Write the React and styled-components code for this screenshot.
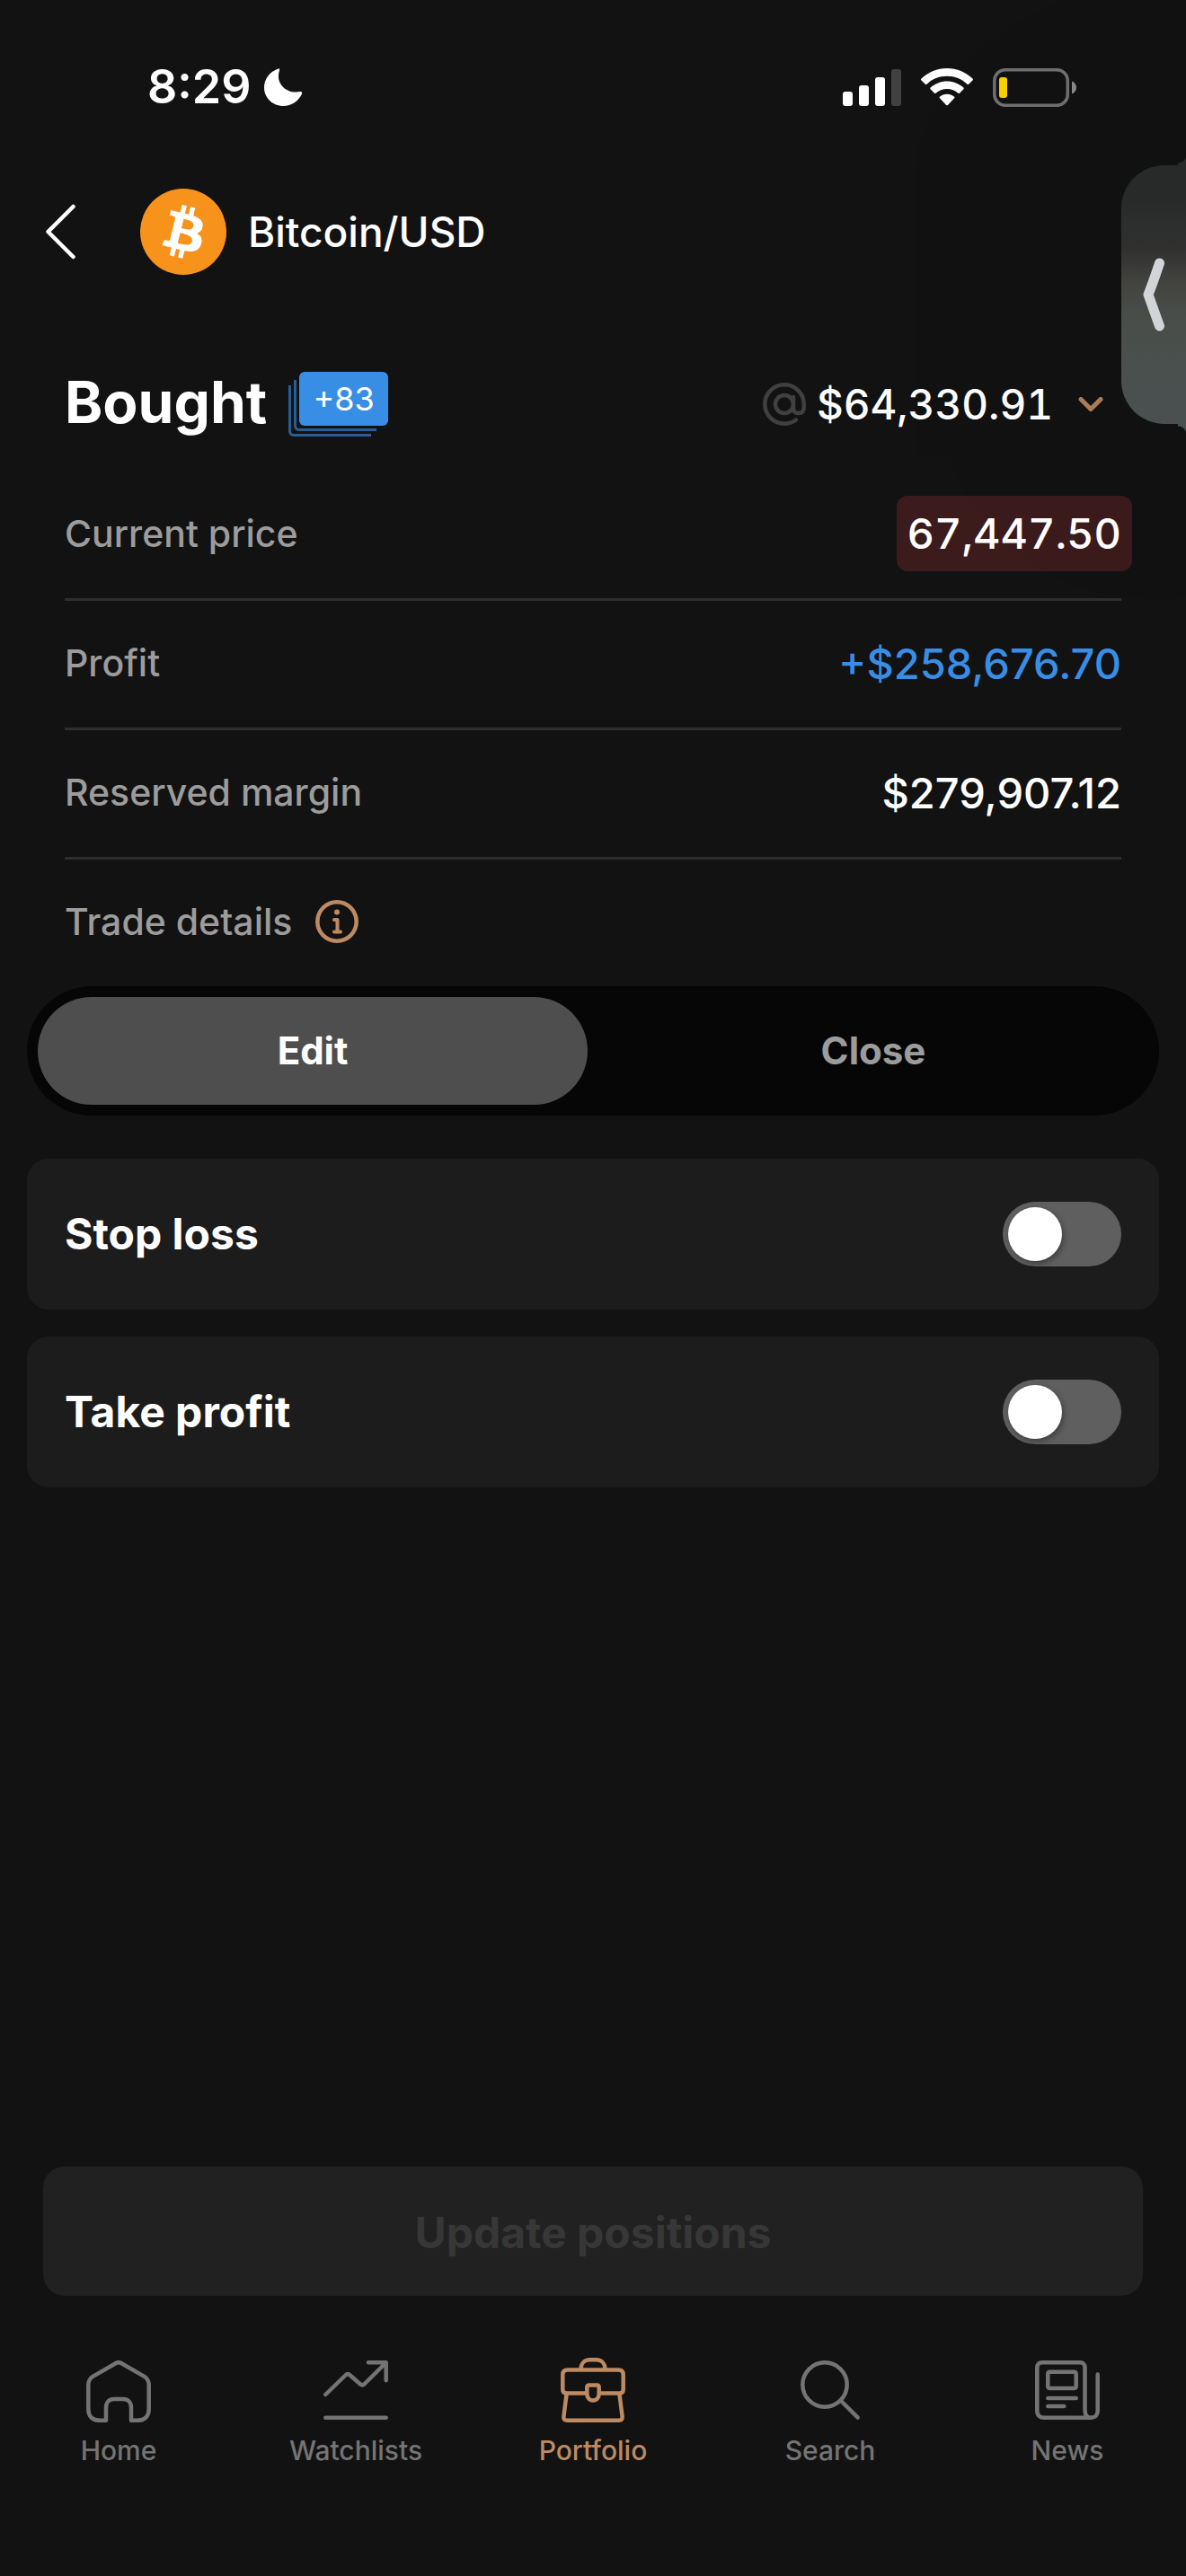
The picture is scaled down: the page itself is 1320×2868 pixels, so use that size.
import React, { useState } from "react";
import styled, { createGlobalStyle, ThemeProvider } from "styled-components";

const theme = {
  colors: {
    background: "#121212",
    card: "#1c1c1c",
    line: "#2e2e2e",
    white: "#ffffff",
    label: "#9c9c9c",
    muted: "#747474",
    blue: "#388ee5",
    darkBlue: "#295d93",
    copper: "#be8a62",
    red: "#3c1b1d",
  },
  sizes: {
    small: "30px",
    label: "41px",
    segment: "42px",
    heading: "46px",
    value: "47px",
    action: "48px",
    title: "64px",
  },
};

const GlobalStyle = createGlobalStyle`
  * {
    box-sizing: border-box;
  }

  body {
    margin: 0;
    background-color: ${theme.colors.background};
    color: ${theme.colors.white};
    font-family: Inter, "Liberation Sans", sans-serif;
  }

  button {
    padding: 0;
    border: none;
    background: none;
    color: inherit;
    font: inherit;
    cursor: pointer;
  }

  svg {
    display: block;
    flex: none;
  }
`;

const Screen = styled.div`
  position: relative;
  display: flex;
  flex-direction: column;
  min-height: 100vh;
  overflow: hidden;
`;

const StatusBar = styled.div`
  display: flex;
  align-items: center;
  justify-content: space-between;
  padding: 66px 122px 0 164px;
  line-height: 62px;
`;

const Clock = styled.div`
  display: flex;
  align-items: center;
  gap: 14px;
  font-size: 52px;
  font-weight: 600;
`;

const StatusIcons = styled.div`
  display: flex;
  align-items: center;
  gap: 22px;
`;

const Header = styled.header`
  display: flex;
  align-items: center;
  margin-top: 82px;
  padding: 0 48px;
`;

const BackButton = styled.button`
  margin-right: 69px;
`;

const PairName = styled.h1`
  margin: 0 0 0 24px;
  font-size: ${(props) => props.theme.sizes.heading};
  font-weight: 500;
`;

const TitleRow = styled.div`
  display: flex;
  align-items: center;
  height: 72px;
  margin: 108px 72px 0;
`;

const Title = styled.h2`
  margin: 0;
  padding-bottom: 4px;
  font-size: ${(props) => props.theme.sizes.title};
  font-weight: 700;
  line-height: 68px;
`;

/* Stack of positions: one solid card with two outlines peeking out below */
const Stack = styled.div`
  position: relative;
  margin-left: 24px;
  padding: 0 0 12px 12px;
`;

const StackCount = styled.span`
  display: block;
  min-width: 99px;
  border-radius: 6px;
  background-color: ${(props) => props.theme.colors.blue};
  font-size: 36px;
  line-height: 60px;
  text-align: center;
`;

const StackEdge = styled.span`
  position: absolute;
  top: ${(props) => 3 + props.$depth * 6}px;
  right: ${(props) => 7 + props.$depth * 6}px;
  bottom: ${(props) => 12 - props.$depth * 6}px;
  left: ${(props) => 12 - props.$depth * 6}px;
  border-left: 3px solid ${(props) => props.theme.colors.darkBlue};
  border-bottom: 3px solid ${(props) => props.theme.colors.darkBlue};
  border-bottom-left-radius: 6px;
`;

const PriceButton = styled.button`
  display: flex;
  align-items: center;
  margin-left: auto;
  padding-right: 20px;
  font-size: ${(props) => props.theme.sizes.heading};
  font-weight: 500;
`;

const Price = styled.span`
  margin: 0 28px 0 12px;
  font-variant-numeric: tabular-nums;
`;

const Details = styled.dl`
  margin: 39px 72px 0;
`;

const DetailRow = styled.div`
  display: flex;
  align-items: center;
  justify-content: space-between;
  height: 144px;
  padding-bottom: 3px;

  &:not(:last-child) {
    border-bottom: 3px solid ${(props) => props.theme.colors.line};
  }

  &:last-child {
    height: 141px;
  }
`;

const DetailLabel = styled.dt`
  display: flex;
  align-items: center;
  gap: 26px;
  color: ${(props) => props.theme.colors.label};
  font-size: ${(props) => props.theme.sizes.label};
  font-weight: 500;
`;

const DetailValue = styled.dd`
  margin: 0;
  color: ${(props) => props.theme.colors[props.$color || "white"]};
  font-size: ${(props) => props.theme.sizes.value};
  font-weight: 500;
`;

const PriceTag = styled.span`
  display: block;
  margin-right: -12px;
  padding: 0 12px;
  border-radius: 12px;
  background-color: ${(props) => props.theme.colors.red};
  font-variant-numeric: tabular-nums;
  line-height: 84px;
`;

const Segments = styled.div`
  display: flex;
  gap: 12px;
  margin: 0 30px;
  padding: 12px;
  border-radius: 72px;
  background-color: #060606;
`;

const Segment = styled.button`
  flex: 1;
  border-radius: 60px;
  background-color: ${(props) => (props.$active ? "#4e4e4e" : "transparent")};
  color: ${(props) => (props.$active ? props.theme.colors.white : props.theme.colors.label)};
  font-size: ${(props) => props.theme.sizes.segment};
  font-weight: 700;
  line-height: 120px;
`;

const Cards = styled.div`
  display: flex;
  flex-direction: column;
  gap: 30px;
  margin: 48px 30px;
`;

const Card = styled.label`
  display: flex;
  align-items: center;
  justify-content: space-between;
  padding: 48px 42px;
  border-radius: 24px;
  background-color: ${(props) => props.theme.colors.card};
  font-size: ${(props) => props.theme.sizes.action};
  font-weight: 700;
  line-height: 72px;
`;

const Switch = styled.input`
  display: flex;
  width: 132px;
  height: 72px;
  margin: 0;
  padding: 6px;
  border-radius: 36px;
  background-color: #5f5f5f;
  appearance: none;
  cursor: pointer;

  &::before {
    content: "";
    width: 60px;
    height: 60px;
    border-radius: 50%;
    background-color: ${(props) => props.theme.colors.white};
    box-shadow: 2px 3px 6px rgba(0, 0, 0, 0.35);
  }

  &:checked {
    justify-content: flex-end;
    background-color: ${(props) => props.theme.colors.copper};
  }
`;

const UpdateButton = styled.button`
  margin: auto 48px 69px;
  padding-top: 4px;
  border-radius: 24px;
  background-color: #212121;
  color: #373737;
  font-size: ${(props) => props.theme.sizes.action};
  font-weight: 700;
  line-height: 140px;
`;

const TabBar = styled.nav`
  display: flex;
  padding-bottom: 120px;
`;

const Tab = styled.a`
  display: flex;
  flex: 1;
  flex-direction: column;
  align-items: center;
  gap: 12px;
  color: ${(props) => (props.$active ? props.theme.colors.copper : props.theme.colors.muted)};
  font-size: ${(props) => props.theme.sizes.small};
  font-weight: 500;
  line-height: 39px;
  text-decoration: none;
`;

/* Handle of the floating video window, parked at the right edge */
const SideHandle = styled.button`
  position: absolute;
  top: 184px;
  right: 0;
  display: flex;
  align-items: center;
  width: 72px;
  height: 288px;
  padding-left: 22px;
  border-radius: 48px 0 0 48px;
  background: linear-gradient(#282a2a 12%, #303030 32%, #42433f 45%, #494d49 58%, #4a504e 75%, #49504f);
  box-shadow: 0 0 320px rgba(0, 0, 0, 0.3);

  &::before,
  &::after {
    content: "";
    position: absolute;
    right: 0;
    width: 9px;
    height: 12px;
  }

  &::before {
    bottom: 100%;
    background: radial-gradient(circle at 0 0, transparent 9px, #282a2a 10px);
  }

  &::after {
    top: 100%;
    background: radial-gradient(circle at 0 100%, transparent 9px, #49504f 10px);
  }
`;

const Icon = ({ width = 72, height = 72, stroke = 4.5, children }) => (
  <svg
    width={width}
    height={height}
    viewBox={`0 0 ${width} ${height}`}
    fill="none"
    stroke="currentColor"
    strokeWidth={stroke}
    strokeLinecap="round"
    strokeLinejoin="round"
    aria-hidden="true"
  >
    {children}
  </svg>
);

const MoonIcon = () => (
  <Icon width={43} height={42} stroke={0}>
    <path
      fill="currentColor"
      d="M16 .4C6 3.500 0 12 0 21.500 0 33 9.500 42 21.500 42c9 0 17-5.500 20.600-13.700.6-1.500-.4-2.500-2-2.200C26 29 12 18 17 2.400c.5-1.400 0-2.300-1-2z"
    />
  </Icon>
);

const SignalIcon = () => (
  <Icon width={65} height={42} stroke={0}>
    <g fill="currentColor">
      <rect y="26" width="11" height="16" rx="3" />
      <rect x="18" y="19" width="11" height="23" rx="3" />
      <rect x="36" y="10" width="11" height="32" rx="3" />
      <rect x="54" y="1" width="11" height="41" rx="3" fill="#414141" />
    </g>
  </Icon>
);

const WifiIcon = () => (
  <Icon width={58} height={42} stroke={0}>
    <g fill="currentColor">
      <path d="M29 0C18.200 0 8 4.200.500 11.600a1.200 1.200 0 0 0 0 1.800l4.300 4.300c.5.5 1.200.5 1.700 0C12.500 12 20.500 8.800 29 8.800s16.500 3.200 22.500 8.900c.5.5 1.200.5 1.700 0l4.300-4.300c.5-.5.5-1.300 0-1.800C50 4.200 39.800 0 29 0z" />
      <path d="M29 14.400c-7 0-13.500 2.700-18.400 7.200-.5.500-.5 1.200 0 1.700l4.400 4.400c.4.4 1.100.4 1.600 0 3.400-3 7.700-4.700 12.400-4.700s9 1.700 12.400 4.700c.5.4 1.200.4 1.600 0l4.400-4.400c.5-.5.5-1.200 0-1.700-4.900-4.500-11.400-7.200-18.400-7.200z" />
      <path d="M29 28.700c-3 0-5.900 1.100-8.100 3-.5.4-.5 1.100 0 1.600l7.200 7.600c.5.6 1.300.6 1.800 0l7.200-7.600c.5-.5.5-1.200 0-1.600-2.200-1.900-5.100-3-8.100-3z" />
    </g>
  </Icon>
);

const BatteryIcon = () => (
  <Icon width={93} height={43} stroke={3.5}>
    <rect x="1.8" y="1.800" width="81.500" height="39.500" rx="12" stroke="#707070" />
    <rect x="7" y="10" width="9" height="23" rx="3" fill="#f8d100" stroke="none" />
    <path d="M88 14.500c3 1 5 4 5 7s-2 6-5 7z" fill="#8a8a8a" stroke="none" />
  </Icon>
);

const BitcoinIcon = () => (
  <svg width="96" height="96" viewBox="0 0 32 32" aria-hidden="true">
    <circle cx="16" cy="16" r="16" fill="#f7931a" />
    <path
      fill="#fff"
      fillRule="evenodd"
      d="M23.189 14.02c.314-2.096-1.283-3.223-3.465-3.975l.708-2.84-1.728-.43-.69 2.765c-.454-.114-.92-.22-1.385-.326l.695-2.783L15.596 6l-.708 2.839c-.376-.086-.746-.17-1.104-.26l.002-.009-2.384-.595-.46 1.846s1.283.294 1.256.312c.7.175.826.638.805 1.006l-.806 3.235c.048.012.11.03.18.057l-.183-.045-1.13 4.532c-.086.212-.303.531-.793.41.018.025-1.256-.313-1.256-.313l-.858 1.978 2.25.561c.418.105.828.215 1.231.318l-.715 2.872 1.727.43.708-2.84c.472.127.93.245 1.378.357l-.706 2.828 1.728.43.715-2.866c2.948.558 5.164.333 6.097-2.333.752-2.146-.037-3.385-1.588-4.192 1.13-.26 1.98-1.003 2.207-2.538zm-3.95 5.538c-.533 2.147-4.148.986-5.32.695l.95-3.805c1.172.293 4.929.872 4.37 3.11zm.535-5.569c-.487 1.953-3.495.96-4.47.717l.86-3.45c.975.243 4.118.696 3.61 2.733z"
    />
  </svg>
);

const AtIcon = () => (
  <svg width="48" height="48" viewBox="0 0 48 48" fill="none" stroke="#404040" strokeWidth="4.5" strokeLinecap="round" aria-hidden="true">
    <circle cx="24" cy="24" r="10" />
    <path d="M34 16v12.500c0 3.500 2 5.500 5.700 5.500s6-2.200 6-6.500V24A21.700 21.700 0 1 0 24 45.700c5.300 0 9.300-1.500 13-4.200" />
  </svg>
);

const InfoIcon = () => (
  <svg width="48" height="48" viewBox="0 0 48 48" fill="none" stroke="#be8a62" strokeWidth="4.5" strokeLinecap="round" strokeLinejoin="round" aria-hidden="true">
    <circle cx="24" cy="24" r="21.700" />
    <circle cx="24" cy="13.500" r="3" fill="#be8a62" stroke="none" />
    <path d="M21 22h3.500v13.500M21 35.500h7" strokeWidth="4" />
  </svg>
);

const HomeIcon = () => (
  <Icon>
    <path d="M15 69.800h7V55.500c0-6 3.500-9.500 9-9.500h10c5.500 0 9 3.500 9 9.500v14.300h7c8 0 12.700-4.500 12.700-12.500V30c0-3.500-1.500-6.300-4.200-8.600L41 7.300c-3.200-2.800-6.800-2.800-10 0L6.500 21.400C3.800 23.700 2.300 26.500 2.300 30v27.300c0 8 4.700 12.500 12.700 12.500z" />
  </Icon>
);

const WatchlistsIcon = () => (
  <Icon>
    <path d="M2.300 41 24.500 19.500c1.800-1.800 3.400-1.800 5.200 0L40.500 29c1.800 1.700 3.600 1.700 5.400 0L69 6M50 5.300h19.700v20M2.300 66.800h67.400" />
  </Icon>
);

const PortfolioIcon = () => (
  <Icon>
    <path d="M22.500 13c0-6.500 4-10.700 10-10.700h7c6 0 10 4.200 10 10.700" />
    <path d="M28.500 39.500h-22c-3 0-4.200-1.200-4.200-4V19c0-3.500 2-5.500 5.500-5.500h56.400c3.500 0 5.500 2 5.500 5.500v16.500c0 2.800-1.200 4-4.200 4h-22" />
    <path d="M6.500 41 3.400 65.500c-.4 2.800 1 4.200 3.800 4.200h57.600c2.800 0 4.200-1.400 3.800-4.200L65.500 41" />
    <path d="M29.300 33c0-1.700.8-2.500 2.500-2.500h8.400c1.700 0 2.500.8 2.500 2.500v6.500c0 5-2.500 8-6.700 8s-6.700-3-6.700-8z" />
  </Icon>
);

const SearchIcon = () => (
  <Icon>
    <circle cx="30" cy="30" r="24.700" />
    <path d="m48 48 18.700 18.700" />
  </Icon>
);

const NewsIcon = () => (
  <Icon>
    <path d="M55.500 58V11c0-3.500-2-5.700-5.500-5.700H7.800C4.300 5.300 2.300 7.500 2.300 11v48c0 5 3 7.800 8 7.800h51.900c-4.200 0-6.700-3-6.700-8.800z" />
    <path d="M62.200 66.800c4.700 0 7.500-2.800 7.500-7.800V18.500" />
    <rect x="14.300" y="15.800" width="31.400" height="18.200" rx="2" />
    <path d="M14.300 45h31.400M14.300 54h18" />
  </Icon>
);

const TABS = [
  { name: "Home", icon: HomeIcon },
  { name: "Watchlists", icon: WatchlistsIcon },
  { name: "Portfolio", icon: PortfolioIcon },
  { name: "Search", icon: SearchIcon },
  { name: "News", icon: NewsIcon },
];

const App = () => {
  const [mode, setMode] = useState("Edit");

  return (
    <ThemeProvider theme={theme}>
      <GlobalStyle />
      <Screen>
        <StatusBar>
          <Clock>
            8:29
            <MoonIcon />
          </Clock>
          <StatusIcons>
            <SignalIcon />
            <WifiIcon />
            <BatteryIcon />
          </StatusIcons>
        </StatusBar>

        <Header>
          <BackButton aria-label="Back">
            <Icon width={39} height={62}>
              <path d="M33.500 3 5.500 31l28 28" />
            </Icon>
          </BackButton>
          <BitcoinIcon />
          <PairName>Bitcoin/USD</PairName>
        </Header>

        <TitleRow>
          <Title>Bought</Title>
          <Stack>
            <StackEdge $depth={2} />
            <StackEdge $depth={1} />
            <StackCount>+83</StackCount>
          </Stack>
          <PriceButton>
            <AtIcon />
            <Price>$64,330.91</Price>
            <Icon width={28} height={16} stroke={5}>
              <path d="m3 2.500 11 11 11-11" stroke="#b48057" />
            </Icon>
          </PriceButton>
        </TitleRow>

        <Details>
          <DetailRow>
            <DetailLabel>Current price</DetailLabel>
            <DetailValue>
              <PriceTag>67,447.50</PriceTag>
            </DetailValue>
          </DetailRow>
          <DetailRow>
            <DetailLabel>Profit</DetailLabel>
            <DetailValue $color="blue">+$258,676.70</DetailValue>
          </DetailRow>
          <DetailRow>
            <DetailLabel>Reserved margin</DetailLabel>
            <DetailValue>$279,907.12</DetailValue>
          </DetailRow>
          <DetailRow>
            <DetailLabel>
              Trade details
              <button aria-label="About trade details">
                <InfoIcon />
              </button>
            </DetailLabel>
          </DetailRow>
        </Details>

        <Segments>
          {["Edit", "Close"].map((name) => (
            <Segment key={name} $active={mode === name} onClick={() => setMode(name)}>
              {name}
            </Segment>
          ))}
        </Segments>

        <Cards>
          <Card>
            Stop loss
            <Switch type="checkbox" role="switch" />
          </Card>
          <Card>
            Take profit
            <Switch type="checkbox" role="switch" />
          </Card>
        </Cards>

        <UpdateButton disabled>Update positions</UpdateButton>

        <TabBar>
          {TABS.map(({ name, icon: TabIcon }) => (
            <Tab key={name} href={`#${name.toLowerCase()}`} $active={name === "Portfolio"}>
              <TabIcon />
              {name}
            </Tab>
          ))}
        </TabBar>

        <SideHandle aria-label="Show video">
          <Icon width={28} height={82} stroke={11}>
            <path d="M20.500 6c-4 12-8.500 25-12.500 35l12.500 35" stroke="#d2d4d8" />
          </Icon>
        </SideHandle>
      </Screen>
    </ThemeProvider>
  );
};

export default App;
